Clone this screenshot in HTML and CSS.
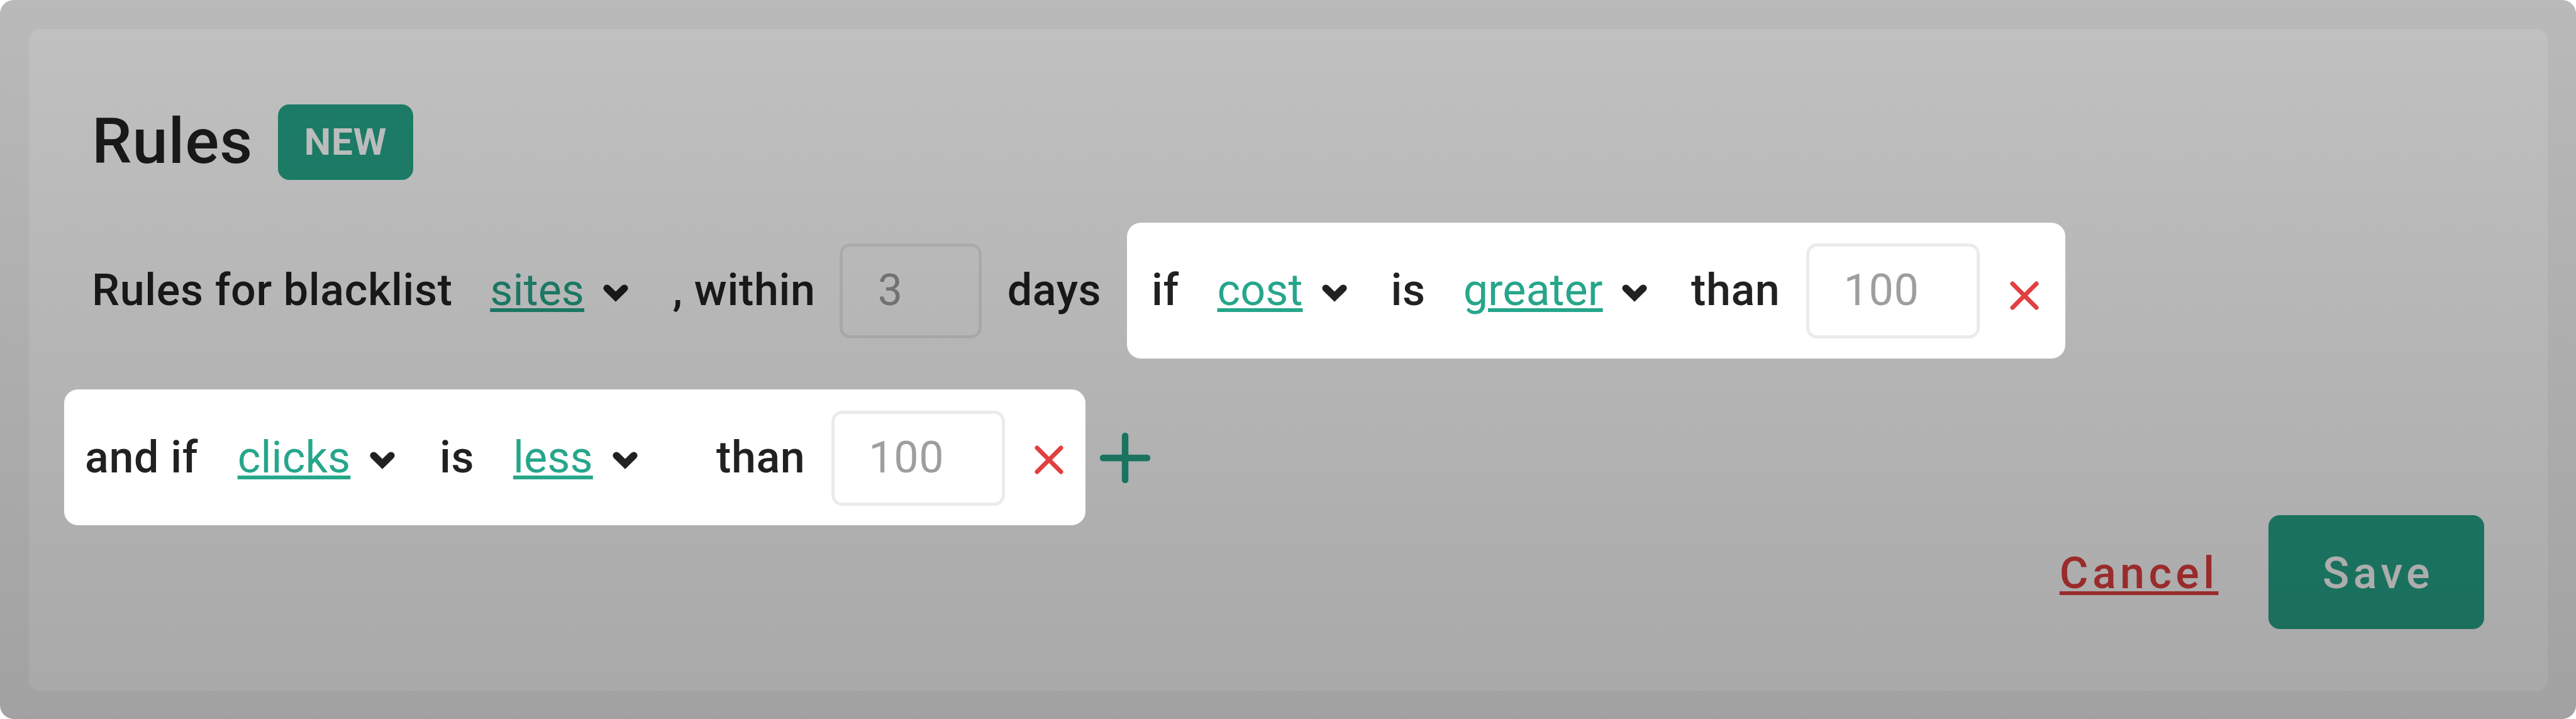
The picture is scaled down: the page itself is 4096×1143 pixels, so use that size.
FILE: index.html
```html
<!DOCTYPE html>
<html lang="en">
<head>
    <meta charset="UTF-8">
    <title>Rules</title>
    <link rel="stylesheet" href="styles.css">
</head>
<body>
    <svg class="sprite" width="0" height="0">
        <symbol id="chevron" viewBox="0 0 40 28">
            <path d="M6.2 6.2 L20 19.6 L33.8 6.2" fill="none" stroke="currentColor" stroke-width="11.6" stroke-linecap="round"/>
        </symbol>
        <symbol id="cross" viewBox="0 0 46 46">
            <path d="M4 4 L42 42 M42 4 L4 42" fill="none" stroke="currentColor" stroke-width="7" stroke-linecap="round"/>
        </symbol>
        <symbol id="plus" viewBox="0 0 80 80">
            <path d="M40 5 V75 M5 40 H75" fill="none" stroke="currentColor" stroke-width="10.4" stroke-linecap="round"/>
        </symbol>
    </svg>

    <div class="page">
        <div class="card">
            <div class="header">
                <h1 class="title">Rules</h1>
                <span class="badge">NEW</span>
            </div>

            <div class="row">
                <div class="lead">
                    <span>Rules for blacklist</span>
                    <a class="select">sites</a>
                    <svg class="chevron"><use href="#chevron"/></svg>
                    <span>, within</span>
                    <span class="field field-small">3</span>
                    <span>days</span>
                </div>
                <div class="condition condition-cost">
                    <span>if</span>
                    <a class="select">cost</a>
                    <svg class="chevron"><use href="#chevron"/></svg>
                    <span>is</span>
                    <a class="select">greater</a>
                    <svg class="chevron"><use href="#chevron"/></svg>
                    <span>than</span>
                    <span class="field">100</span>
                    <svg class="cross"><use href="#cross"/></svg>
                </div>
            </div>

            <div class="row row-second">
                <div class="condition condition-clicks">
                    <span>and if</span>
                    <a class="select">clicks</a>
                    <svg class="chevron"><use href="#chevron"/></svg>
                    <span>is</span>
                    <a class="select">less</a>
                    <svg class="chevron"><use href="#chevron"/></svg>
                    <span>than</span>
                    <span class="field">100</span>
                    <svg class="cross"><use href="#cross"/></svg>
                </div>
                <svg class="plus"><use href="#plus"/></svg>
            </div>

            <div class="actions">
                <a class="cancel">Cancel</a>
                <button class="save" type="button">Save</button>
            </div>
        </div>
        <div class="overlay"></div>
    </div>
</body>
</html>
```
FILE: styles.css
```css
*{
    box-sizing: border-box;
    margin: 0;
    padding: 0;
}

body {
    background-color: #fff;
    font-family: Roboto, sans-serif;
    font-size: 70px;
    font-weight: 500;
    line-height: 82px;
    letter-spacing: 0.65px;
    color: #212121;
}

.sprite {
    display: block;
}

.page {
    position: relative;
    width: 4096px;
    height: 1143px;
    padding: 45.5px;
    background: #f5f5f5;
    border-radius: 22px;
    overflow: hidden;
}

.card {
    height: 1053px;
    padding: 120.5px 101px 0 100.5px;
    background: #fff;
    border-radius: 17px;
}

/* dims everything but the conditions */
.overlay {
    position: absolute;
    inset: 0;
    background: linear-gradient(180deg, rgba(0, 0, 0, 0.245), rgba(0, 0, 0, 0.34));
    pointer-events: none;
}

.header {
    display: flex;
    align-items: center;
    height: 120px;
}

.title {
    width: 296px;
    padding-bottom: 2px;
    font-size: 101px;
    font-weight: 500;
    line-height: 118px;
    letter-spacing: 0.9px;
}

.badge {
    width: 215px;
    height: 120px;
    line-height: 120px;
    text-align: center;
    font-size: 60px;
    font-weight: 700;
    letter-spacing: 0.9px;
    color: #fff;
    background: #26a68a;
    border-radius: 18px;
}

.row {
    display: flex;
    align-items: center;
    height: 216px;
    margin-top: 67.5px;
    white-space: nowrap;
}

.row-second {
    margin: 49.5px 0 0 -44px;
}

.lead,
.condition {
    display: grid;
    align-items: center;
    height: 216px;
}

.lead {
    grid-template-columns: 633.3px 179.7px 110.5px 265.2px 267px 190.7px;
}

.condition {
    position: relative;
    z-index: 2;
    background: #fff;
    border-radius: 22px;
}

.condition-cost {
    width: 1491.7px;
    padding-left: 38.6px;
    grid-template-columns: 104.5px 166.5px 109.5px 115.2px 252.3px 110px 183.5px 323.2px 46px;
}

.condition-clicks {
    width: 1624px;
    padding-left: 33px;
    grid-template-columns: 242.7px 209.9px 111.4px 117px 158.3px 164.7px 183.3px 323.2px 46px;
}

.lead > span,
.condition > span,
.select {
    margin-top: -1px;
}

.select {
    justify-self: start;
    font-weight: 400;
    letter-spacing: 0.1px;
    color: #26a68a;
    text-decoration: underline;
    text-decoration-thickness: 5.5px;
    text-underline-offset: 5px;
}

.lead > .field,
.condition > .field {
    width: 275.5px;
    height: 151px;
    margin-top: 2px;
    padding-left: 54px;
    border: 5px solid #ebebeb;
    border-radius: 17px;
    line-height: 138px;
    font-weight: 400;
    color: #9e9e9e;
}

.lead > .field-small {
    width: 226px;
    padding-left: 56px;
}

.chevron {
    width: 40px;
    height: 28px;
    margin-top: 9px;
}

.cross {
    width: 46px;
    height: 46px;
    margin-top: 7px;
    color: #e23f40;
}

.condition-cost .cross {
    margin-top: 16px;
}

.plus {
    width: 80px;
    height: 80px;
    margin: 2px 0 0 23px;
    color: #26a68a;
}

.actions {
    display: flex;
    justify-content: flex-end;
    align-items: center;
    height: 181px;
    margin-top: -16.5px;
    letter-spacing: 6.4px;
}

.cancel {
    margin: 3px 79px 0 0;
    color: #e23f40;
    text-decoration: underline;
    text-decoration-thickness: 5.5px;
    text-underline-offset: 5px;
}

.save {
    width: 343px;
    height: 181px;
    padding: 3px 0 0 7px;
    border: none;
    border-radius: 18px;
    font: inherit;
    letter-spacing: inherit;
    color: #fff;
    background: #26a68a;
}
```
